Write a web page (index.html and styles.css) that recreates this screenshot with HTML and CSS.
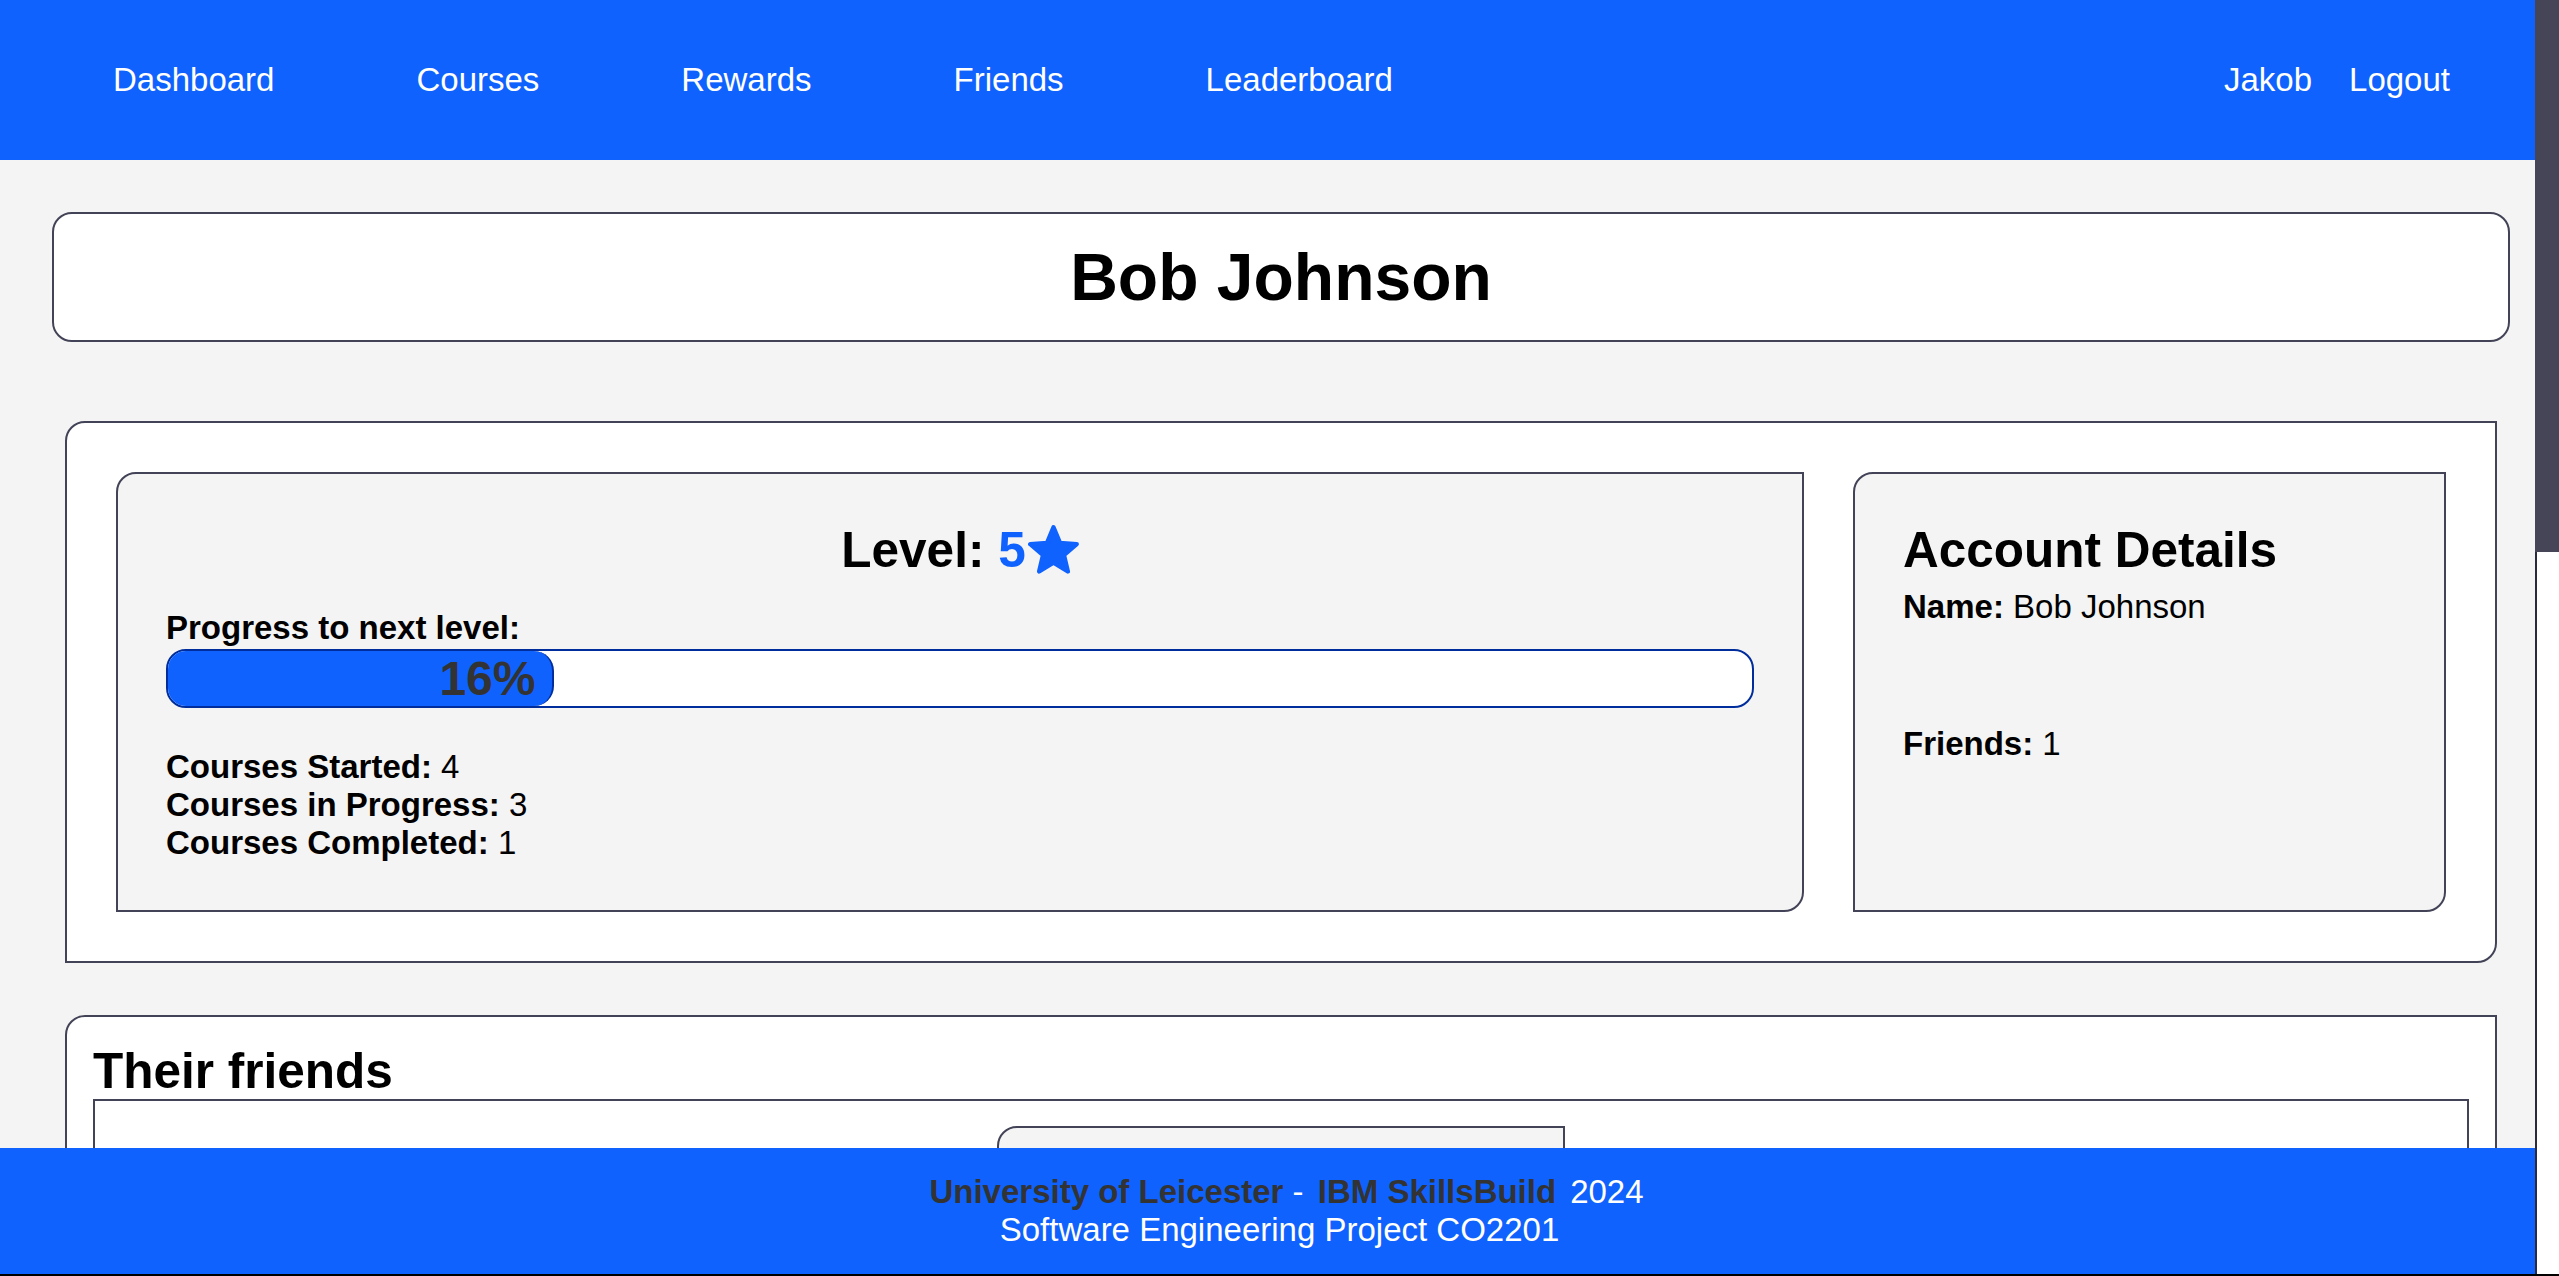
FILE: index.html
```html
<!DOCTYPE html>
<html lang="en">
<head>
<meta charset="utf-8">
<title>Bob Johnson - Profile</title>
<link rel="stylesheet" href="styles.css">
</head>
<body>
<div class="page">
  <nav class="topnav">
    <ul class="nav-links">
      <li><a href="#">Dashboard</a></li>
      <li><a href="#">Courses</a></li>
      <li><a href="#">Rewards</a></li>
      <li><a href="#">Friends</a></li>
      <li><a href="#">Leaderboard</a></li>
    </ul>
    <ul class="nav-user">
      <li><a href="#">Jakob</a></li>
      <li><a href="#">Logout</a></li>
    </ul>
  </nav>

  <main class="content">
    <section class="title-box">
      <h1>Bob Johnson</h1>
    </section>

    <section class="panel stats-panel">
      <div class="card level-card">
        <h2 class="level-title">Level: <span class="level-num">5</span><svg class="star" viewBox="4 6 92 88" aria-hidden="true"><polygon points="50,10 61.64,37.98 91.85,40.4 68.83,60.12 75.86,89.6 50,73.8 24.14,89.6 31.17,60.12 8.15,40.4 38.36,37.98"/></svg></h2>
        <p class="progress-label">Progress to next level:</p>
        <div class="progress-bar">
          <div class="progress-fill" style="width: 24.4%"><span>16%</span></div>
        </div>
        <div class="course-stats">
          <p><strong>Courses Started:</strong> 4</p>
          <p><strong>Courses in Progress:</strong> 3</p>
          <p><strong>Courses Completed:</strong> 1</p>
        </div>
      </div>

      <div class="card account-card">
        <h2>Account Details</h2>
        <p class="detail-name"><strong>Name:</strong> Bob Johnson</p>
        <p class="detail-friends"><strong>Friends:</strong> 1</p>
      </div>
    </section>

    <section class="panel friends-panel">
      <h2>Their friends</h2>
      <div class="friend-list">
        <div class="friend-card"></div>
      </div>
    </section>
  </main>

  <footer class="site-footer">
    <p class="credits"><a href="#">University of Leicester</a> - <a href="#" class="ibm">IBM SkillsBuild</a><span class="year">2024</span></p>
    <p class="course">Software Engineering Project CO2201</p>
  </footer>
</div>

<div class="scrollbar" aria-hidden="true">
  <div class="scroll-thumb"></div>
  <div class="scroll-track"></div>
</div>
</body>
</html>
```

FILE: styles.css
```css
html, body {
  margin: 0;
  height: 100%;
}

body {
  background: #000;
  font-family: "Liberation Sans", Arial, sans-serif;
  font-size: 33px;
  color: #000;
  overflow: hidden;
}

.page {
  height: calc(100vh - 2px);
  display: flex;
  flex-direction: column;
  background: #f4f4f4;
  overflow: hidden;
}

/* ---------- navigation ---------- */
.topnav {
  flex: 0 0 160px;
  background: #0f62fe;
  display: flex;
  align-items: center;
  justify-content: space-between;
  padding: 0 109px 0 113px;
}

.topnav ul {
  list-style: none;
  margin: 0;
  padding: 0;
  display: flex;
}

.nav-links {
  gap: 142px;
}

.nav-user {
  gap: 37px;
}

.topnav a {
  color: #fff;
  text-decoration: none;
}

/* ---------- content ---------- */
.content {
  flex: 1;
  min-height: 0;
  overflow: hidden;
}

.title-box {
  margin: 52px 49px 0 52px;
  background: #fff;
  border: 2px solid #434358;
  border-radius: 20px;
  padding: 25px 0;
  text-align: center;
}

.title-box h1 {
  margin: 0;
  font-size: 66px;
}

.panel {
  margin: 0 62px 0 65px;
  background: #fff;
  border: 2px solid #434358;
  border-radius: 20px 0 20px 0;
}

.stats-panel {
  margin-top: 79px;
  padding: 49px;
  display: grid;
  grid-template-columns: 1fr 593px;
  gap: 49px;
}

.card {
  background: #f4f4f4;
  border: 2px solid #434358;
  border-radius: 20px 0 20px 0;
  padding: 47px 48px 48px;
}

.card h2 {
  margin: 0;
  font-size: 49.5px;
}

.card p {
  margin: 0;
}

.level-title {
  text-align: center;
}

.level-num {
  color: #0f62fe;
}

.star {
  width: 51px;
  height: 49px;
  margin-left: 2px;
  vertical-align: -7px;
  fill: #0f62fe;
  stroke: #0f62fe;
  stroke-width: 8;
  stroke-linejoin: round;
}

.card .progress-label {
  margin-top: 31px;
  font-weight: bold;
}

.progress-bar {
  margin-top: 2px;
  background: #fff;
  border: 2px solid #002d9c;
  border-radius: 20px;
  overflow: hidden;
  display: flex;
}

.progress-fill {
  box-sizing: border-box;
  background: #0f62fe;
  border-right: 2px solid #002d9c;
  border-radius: 0 20px 20px 0;
  text-align: right;
  padding-right: 17px;
  font-size: 48px;
  font-weight: bold;
  color: #333;
}

.course-stats {
  margin-top: 40px;
}

.card .detail-name {
  margin-top: 10px;
}

.card .detail-friends {
  margin-top: 99px;
}

.friends-panel {
  margin-top: 52px;
  padding: 25px 26px 26px;
}

.friends-panel h2 {
  margin: 0;
  font-size: 49.5px;
}

.friend-list {
  background: #fff;
  border: 2px solid #434358;
  padding: 25px;
  display: flex;
  justify-content: center;
}

.friend-card {
  width: 568px;
  box-sizing: border-box;
  height: 320px;
  background: #f4f4f4;
  border: 2px solid #434358;
  border-radius: 20px 0 20px 0;
}

/* ---------- footer ---------- */
.site-footer {
  flex: 0 0 auto;
  background: #0f62fe;
  padding: 25px 0;
  text-align: center;
  color: #fff;
}

.site-footer p {
  margin: 0;
}

.credits {
  padding-left: 14px;
}

.credits a {
  color: #333;
  font-weight: bold;
  text-decoration: none;
}

.credits .ibm {
  margin-left: 5px;
}

.credits .year {
  margin-left: 14px;
}

/* ---------- window scrollbar (drawn over the page edge) ---------- */
.scrollbar {
  position: fixed;
  top: 0;
  right: 0;
  width: 24px;
  height: calc(100vh - 2px);
  display: flex;
  flex-direction: column;
}

.scroll-thumb {
  flex: 0 0 552px;
  background: #454557;
}

.scroll-track {
  flex: 1;
  background: #fff;
  border-left: 2px solid #2a2a3e;
}
```
